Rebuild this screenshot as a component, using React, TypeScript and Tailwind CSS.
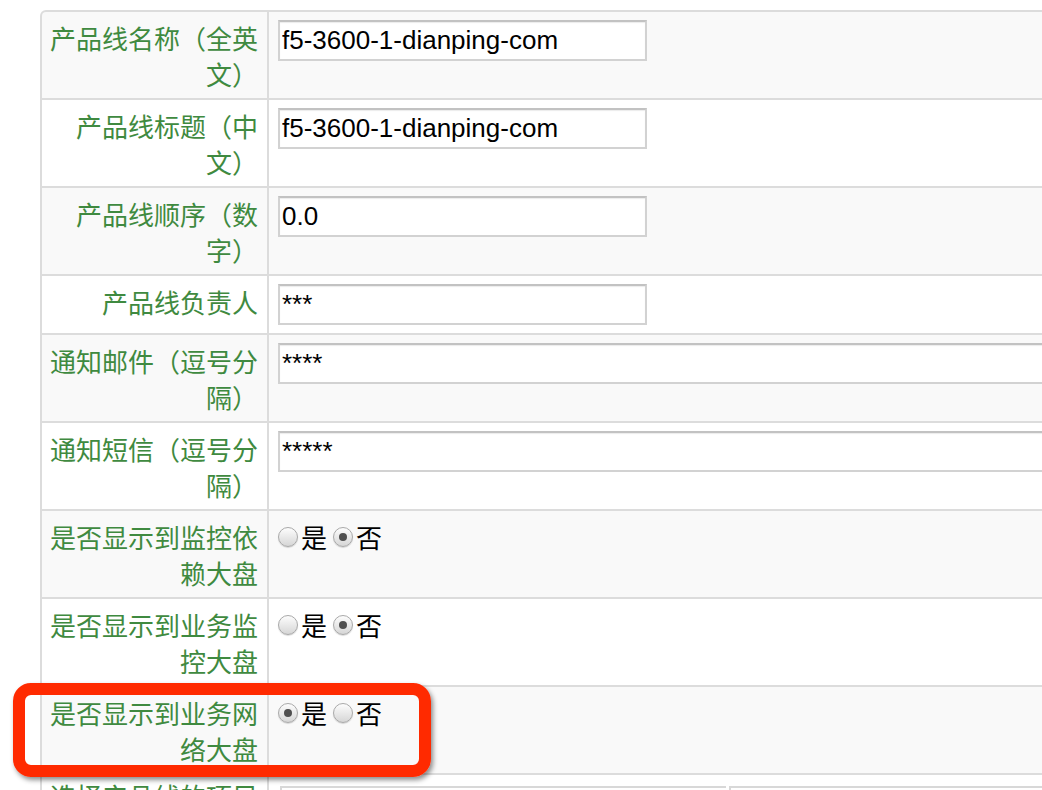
type Row =
	| { label: string; kind: "input"; value: string; wide?: boolean }
	| { label: string; kind: "radio"; yes: boolean };

const rows: Row[] = [
	{ label: "产品线名称（全英文）", kind: "input", value: "f5-3600-1-dianping-com" },
	{ label: "产品线标题（中文）", kind: "input", value: "f5-3600-1-dianping-com" },
	{ label: "产品线顺序（数字）", kind: "input", value: "0.0" },
	{ label: "产品线负责人", kind: "input", value: "***" },
	{ label: "通知邮件（逗号分隔）", kind: "input", value: "****", wide: true },
	{ label: "通知短信（逗号分隔）", kind: "input", value: "*****", wide: true },
	{ label: "是否显示到监控依赖大盘", kind: "radio", yes: false },
	{ label: "是否显示到业务监控大盘", kind: "radio", yes: false },
	{ label: "是否显示到业务网络大盘", kind: "radio", yes: true },
];

const Radio = ({ checked }: { checked: boolean }) => (
	<span className="w-[20px] h-[20px] rounded-full border border-[#a9a9a9] bg-gradient-to-b from-[#fdfdfd] to-[#d6d6d6] shadow-[0_1px_1px_rgba(0,0,0,0.15)] flex items-center justify-center shrink-0">
		{checked && <span className="w-[8px] h-[8px] rounded-full bg-[#4f4f4f]" />}
	</span>
);

const App = () => {
	return (
		<div className="relative w-[1042px] h-[790px] overflow-hidden bg-white">
			<div className="ml-[40px] mt-[10px] w-[1060px] grid grid-cols-[225px_1fr] gap-[2px] bg-[#dcdcdc] pt-[2px] pl-[2px] rounded-tl-[6px]">
				{rows.map((row, i) => {
					const bg = i % 2 === 0 ? "bg-[#f9f9f9]" : "bg-white";
					return [
						<div
							key={`l${i}`}
							className={`${bg} pl-[7px] pr-[9px] pt-[8px] pb-[6px] text-right text-[26px] leading-[36px] text-[#3f8a40] font-['Noto_Sans_CJK_SC',sans-serif] ${i === 0 ? "rounded-tl-[4px]" : ""}`}>
							{row.label}
						</div>,
						<div key={`v${i}`} className={`${bg} pl-[9px] pt-[8px] pb-[8px]`}>
							{row.kind === "input" ? (
								<input
									readOnly
									defaultValue={row.value}
									className={`${row.wide ? "w-[820px]" : "w-[369px]"} h-[41px] block bg-white border-2 border-[#d2d2d2] border-t-[#c2c2c2] shadow-[inset_0_1px_1px_rgba(0,0,0,0.08)] px-[2px] text-[26px] text-black font-['Liberation_Sans',Arial,sans-serif] outline-none`}
								/>
							) : (
								<div className="flex items-center h-[36px] text-[26px] text-black font-['Noto_Sans_CJK_SC',sans-serif]">
									<Radio checked={row.yes} />
									<span className="ml-[3px] leading-[36px]">是</span>
									<span className="ml-[6px]">
										<Radio checked={!row.yes} />
									</span>
									<span className="ml-[3px] leading-[36px]">否</span>
								</div>
							)}
						</div>,
					];
				})}
				<div className="bg-white pl-[7px] pr-[9px] pt-[3px] h-[40px] text-right text-[26px] leading-[36px] text-[#3f8a40] font-['Noto_Sans_CJK_SC',sans-serif] whitespace-nowrap overflow-hidden">
					选择产品线的项目
				</div>
				<div className="bg-white pl-[11px] pt-[11px] h-[40px] flex gap-[3px]">
					<div className="w-[446px] h-[40px] border-t-2 border-l-2 border-[#d8d8d8]" />
					<div className="flex-1 h-[40px] border-t-2 border-l-2 border-[#d8d8d8]" />
				</div>
			</div>
			{/* annotation */}
			<div className="absolute left-[13px] top-[683px] w-[418px] h-[94px] border-[12px] border-[#ff2a00] rounded-[18px] shadow-[2px_3px_5px_rgba(0,0,0,0.45)]" />
		</div>
	);
};

export default App;
